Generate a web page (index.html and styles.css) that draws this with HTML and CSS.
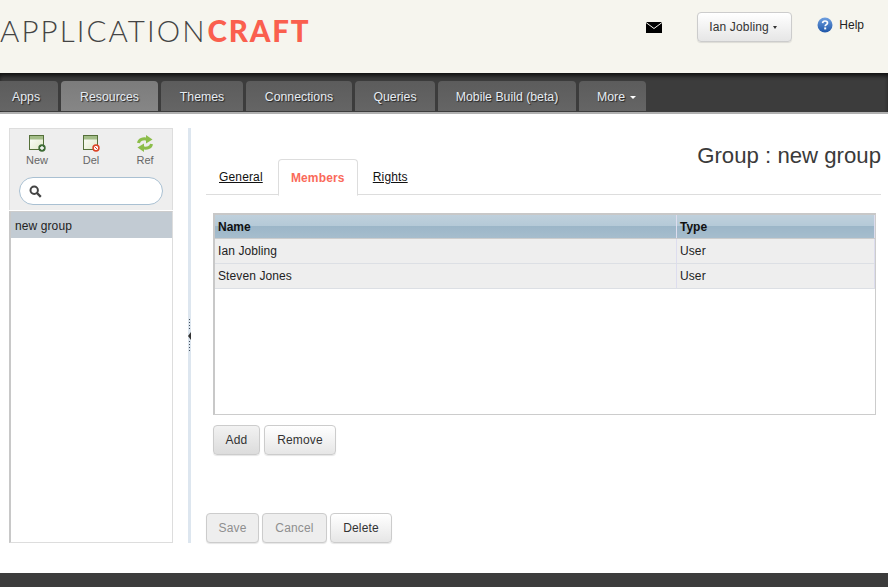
FILE: index.html
```html
<!DOCTYPE html>
<html lang="en">
<head>
    <meta charset="UTF-8">
    <meta name="viewport" content="width=device-width, initial-scale=1.0">
    <title>Application Craft</title>
    <link rel="stylesheet" href="styles.css">
</head>
<body>

    <!-- Header -->
    <div class="header">
        <div class="logo"><span class="logo-thin">APPLICATION</span><span class="logo-bold">CRAFT</span></div>
        <div class="header-right">
            <svg class="mail" width="16" height="11" viewBox="0 0 16 11">
                <rect width="16" height="11" fill="#000"/>
                <path d="M0 .5 L8 6.5 L16 .5" fill="none" stroke="#f6f5ee" stroke-width="1"/>
            </svg>
            <button class="btn user-btn">Ian Jobling <span class="caret"></span></button>
            <a class="help">
                <svg width="16" height="16" viewBox="0 0 16 16">
                    <defs>
                        <linearGradient id="helpFill" x1="0" y1="0" x2="0" y2="1">
                            <stop offset="0" stop-color="#6f9fe0"/>
                            <stop offset="1" stop-color="#1f56a8"/>
                        </linearGradient>
                    </defs>
                    <circle cx="8" cy="8" r="7.5" fill="url(#helpFill)"/>
                    <path d="M5.6 6.1 C5.7 4.6 6.8 4 8 4 C9.4 4 10.5 4.8 10.5 6 C10.5 7.7 8.2 7.6 8.2 9.3" fill="none" stroke="#fff" stroke-width="1.7"/>
                    <rect x="7.2" y="10.4" width="2" height="2" fill="#fff"/>
                </svg>
                Help
            </a>
        </div>
    </div>

    <!-- Nav -->
    <div class="nav">
        <a class="nav-tab tab-apps">Apps</a>
        <a class="nav-tab tab-resources active">Resources</a>
        <a class="nav-tab tab-themes">Themes</a>
        <a class="nav-tab tab-connections">Connections</a>
        <a class="nav-tab tab-queries">Queries</a>
        <a class="nav-tab tab-mobile">Mobile Build (beta)</a>
        <a class="nav-tab tab-more">More <span class="caret caret-white"></span></a>
    </div>

    <div class="main">
        <!-- Left panel -->
        <div class="side">
            <div class="toolbar">
                <div class="tools">
                    <div class="tool">
                        <svg width="18" height="17" viewBox="0 0 18 17">
                            <defs>
                                <linearGradient id="winBody" x1="0" y1="0" x2="1" y2="1">
                                    <stop offset="0" stop-color="#fff"/>
                                    <stop offset="1" stop-color="#dfe8c8"/>
                                </linearGradient>
                            </defs>
                            <rect x="1.5" y=".5" width="14" height="14" fill="url(#winBody)" stroke="#55703a"/>
                            <rect x="2" y="1" width="13" height="3.5" fill="#a3bd88"/>
                            <circle cx="14" cy="13" r="3.7" fill="#3d6b35"/>
                            <path d="M12 13 H16 M14 11 V15" stroke="#fff" stroke-width="1.3"/>
                        </svg>
                        <span>New</span>
                    </div>
                    <div class="tool">
                        <svg width="18" height="17" viewBox="0 0 18 17">
                            <rect x="1.5" y=".5" width="14" height="14" fill="url(#winBody)" stroke="#55703a"/>
                            <rect x="2" y="1" width="13" height="3.5" fill="#a3bd88"/>
                            <circle cx="14" cy="13" r="3.7" fill="#dc4426"/>
                            <circle cx="14" cy="13" r="1.7" fill="none" stroke="#fff" stroke-width="1"/>
                            <path d="M12.8 14.2 L15.2 11.8" stroke="#fff" stroke-width="1"/>
                        </svg>
                        <span>Del</span>
                    </div>
                    <div class="tool">
                        <svg width="18" height="17" viewBox="0 0 18 17">
                            <path d="M2.5 8 C3 4.5 7 3.2 11 4.2" fill="none" stroke="#8cbd4a" stroke-width="3"/>
                            <path d="M10 0 L16.5 4.5 L10 8.5 Z" fill="#8cbd4a"/>
                            <path d="M15.5 9 C15 12.5 11 13.8 7 12.8" fill="none" stroke="#8cbd4a" stroke-width="3"/>
                            <path d="M8 8.5 L1.5 12.5 L8 17 Z" fill="#8cbd4a"/>
                        </svg>
                        <span>Ref</span>
                    </div>
                </div>
                <div class="search">
                    <svg width="13" height="13" viewBox="0 0 13 13">
                        <circle cx="5.2" cy="5.2" r="3.7" fill="none" stroke="#444" stroke-width="2"/>
                        <path d="M8 8 L11.8 11.8" stroke="#444" stroke-width="2.4"/>
                    </svg>
                </div>
            </div>
            <div class="list">
                <div class="list-item">new group</div>
            </div>
        </div>

        <!-- Splitter -->
        <div class="splitter">
            <div class="grip"></div>
            <div class="grip-arrow"></div>
            <div class="grip"></div>
        </div>

        <!-- Content -->
        <div class="content">
            <h2 class="title">Group : new group</h2>
            <div class="tabs">
                <a class="tab">General</a>
                <a class="tab active">Members</a>
                <a class="tab">Rights</a>
            </div>

            <div class="grid-box">
                <table class="grid">
                    <thead>
                        <tr><th class="col-name">Name</th><th>Type</th></tr>
                    </thead>
                    <tbody>
                        <tr><td>Ian Jobling</td><td>User</td></tr>
                        <tr><td>Steven Jones</td><td>User</td></tr>
                    </tbody>
                </table>
            </div>

            <div class="grid-buttons">
                <button class="btn btn-add">Add</button>
                <button class="btn btn-remove">Remove</button>
            </div>

            <div class="form-buttons">
                <button class="btn btn-save" disabled>Save</button>
                <button class="btn btn-cancel" disabled>Cancel</button>
                <button class="btn btn-delete">Delete</button>
            </div>
        </div>
    </div>

    <div class="footer"></div>

</body>
</html>
```

FILE: styles.css
```css
/* General Styles */
html, body {
    margin: 0;
    padding: 0;
    height: 587px;
    overflow: hidden;
}

body {
    font-family: "Liberation Sans", Arial, sans-serif;
    font-size: 12px;
    color: #222;
    background-color: #fff;
}

/* Buttons */
.btn {
    font-family: "Liberation Sans", Arial, sans-serif;
    font-size: 12px;
    letter-spacing: 0.15px;
    color: #333;
    height: 30px;
    padding: 0;
    border: 1px solid #ccc;
    border-radius: 4px;
    background: linear-gradient(#fff, #e6e6e6);
    box-shadow: 0 1px 1px rgba(0, 0, 0, 0.1);
}

.btn:disabled {
    color: #8f8f8f;
    background: #eee;
}

.caret {
    display: inline-block;
    border-top: 3px solid #333;
    border-left: 2.5px solid transparent;
    border-right: 2.5px solid transparent;
    vertical-align: middle;
    margin-left: 1px;
}

.caret-white {
    border-top: 3px solid #fff;
    border-left: 3px solid transparent;
    border-right: 3px solid transparent;
    margin-left: 2px;
}

/* Header */
.header {
    display: flex;
    justify-content: space-between;
    height: 73px;
    background-color: #f6f5ee;
}

.logo {
    margin-top: 11px;
    font-family: Lato, "Liberation Sans", sans-serif;
    font-size: 29.5px;
    line-height: 40px;
    white-space: nowrap;
}

.logo-thin {
    font-weight: 300;
    color: #444;
    letter-spacing: 2.08px;
}

.logo-bold {
    font-weight: 900;
    color: #fa5f4e;
    margin-left: 1px;
    letter-spacing: 1.8px;
}

.header-right {
    display: flex;
    align-items: flex-start;
    padding-right: 24px;
}

.mail {
    margin-top: 22px;
    margin-right: 35px;
}

.user-btn {
    width: 95px;
    margin-top: 12px;
    margin-right: 25px;
    padding-right: 3px;
    color: #333;
}

.help {
    display: flex;
    align-items: center;
    gap: 6px;
    margin-top: 17px;
    color: #222;
}

/* Nav */
.nav {
    display: flex;
    gap: 3px;
    height: 31px;
    padding-top: 8px;
    background-color: #3c3c3c;
    box-shadow: inset 0 4px 4px -1px #111;
    border-bottom: 2px solid #b0b0b0;
}

.nav-tab {
    box-sizing: border-box;
    height: 30px;
    line-height: 33px;
    text-align: center;
    color: #e6ecf2;
    font-size: 12.3px;
    text-shadow: 1px 1px 1px #222;
    background: linear-gradient(#5c5c5c, #656565);
    border-radius: 4px 4px 0 0;
}

.nav-tab.active {
    background: linear-gradient(#7c7c7c, #868686);
}

.tab-apps {
    width: 58px;
    padding-left: 12px;
    text-align: left;
    border-top-left-radius: 0;
}

.tab-resources { width: 97px; }
.tab-themes { width: 82px; }
.tab-connections { width: 106px; }
.tab-queries { width: 80px; }
.tab-mobile { width: 138px; }

.tab-more {
    width: 67px;
    padding-left: 18px;
    text-align: left;
}

/* Main area */
.main {
    display: flex;
    height: 415px;
    padding: 14px 7px 30px 9px;
}

/* Left panel */
.side {
    width: 164px;
    flex: none;
    display: flex;
    flex-direction: column;
}

.toolbar {
    height: 82px;
    background-color: #eee;
    border: 1px solid #ddd;
    border-bottom: none;
    box-sizing: border-box;
}

.tools {
    display: flex;
    padding-top: 6px;
}

.tool {
    width: 54.5px;
    display: flex;
    flex-direction: column;
    align-items: center;
    gap: 2px;
    color: #666;
    font-size: 11px;
}

.search {
    display: flex;
    align-items: center;
    width: 133px;
    height: 26px;
    margin: 11px 0 0 9px;
    padding-left: 9px;
    background-color: #fff;
    border: 1px solid #a9c0d2;
    border-radius: 14px;
}

.list {
    flex: 1;
    margin-top: 1px;
    border: 1px solid #ddd;
    border-left: 2px solid #c8c8c8;
    border-top: 1px solid #ccc;
}

.list-item {
    height: 26px;
    line-height: 28px;
    padding-left: 4px;
    letter-spacing: 0.1px;
    color: #222;
    background-color: #c2cbd3;
}

/* Splitter */
.splitter {
    width: 3px;
    flex: none;
    margin-left: 15px;
    margin-right: 15px;
    display: flex;
    flex-direction: column;
    align-items: center;
    justify-content: center;
    gap: 1px;
    background-color: #dde6ef;
}

.grip {
    width: 1px;
    height: 12px;
    background: repeating-linear-gradient(#44505c 0, #44505c 1px, transparent 1px, transparent 3px);
}

.grip-arrow {
    width: 0;
    height: 0;
    margin-right: 1px;
    border-top: 4px solid transparent;
    border-bottom: 4px solid transparent;
    border-right: 3px solid #333;
}

/* Content */
.content {
    flex: 1;
    min-width: 0;
}

.title {
    margin: 0;
    height: 31px;
    padding-top: 13px;
    line-height: 30px;
    text-align: right;
    font-size: 22.2px;
    font-weight: normal;
    color: #3a3a3a;
    box-sizing: border-box;
}

.tabs {
    display: flex;
    height: 35px;
    padding-left: 13px;
    border-bottom: 1px solid #ddd;
}

.tab {
    line-height: 37px;
    margin-right: 15px;
    letter-spacing: 0.15px;
    color: #111;
    text-decoration: underline;
}

.tab.active {
    width: 78px;
    height: 35px;
    text-align: center;
    font-weight: bold;
    color: #fa6a5a;
    text-decoration: none;
    background-color: #fff;
    border: 1px solid #ddd;
    border-bottom: 1px solid #fff;
    border-radius: 4px 4px 0 0;
}

.grid-box {
    height: 199px;
    margin-top: 18px;
    margin-left: 7px;
    margin-right: 5px;
    border: 1px solid #ccc;
    border-top: 2px solid #c8c8c8;
    border-left: 2px solid #c8c8c8;
}

.grid {
    width: 100%;
    border-collapse: collapse;
    table-layout: fixed;
}

.grid th {
    height: 23px;
    padding: 0 3px;
    text-align: left;
    color: #111;
    font-weight: bold;
    background: linear-gradient(#bfd0dc 0, #b4c9d7 50%, #9cb6c8 50%, #a6bdcd 100%);
    border-bottom: 1px solid #ccc;
    border-right: 1px solid #dde;
}

.col-name {
    width: 455px;
}

.grid td {
    height: 24px;
    padding: 0 3px;
    letter-spacing: 0.1px;
    color: #222;
    background-color: #eee;
    border-bottom: 1px solid #dcdfe4;
    border-right: 1px solid #dde;
}

.grid-buttons {
    display: flex;
    gap: 4px;
    margin-top: 10px;
    margin-left: 7px;
}

.btn-add {
    width: 47px;
    background: linear-gradient(#f2f2f2, #dcdcdc);
}

.btn-remove {
    width: 72px;
}

.form-buttons {
    display: flex;
    gap: 3px;
    margin-top: 58px;
}

.btn-save {
    width: 53px;
}

.btn-cancel {
    width: 65px;
}

.btn-delete {
    width: 62px;
}

/* Footer */
.footer {
    height: 14px;
    background-color: #3c3c3c;
}
```
